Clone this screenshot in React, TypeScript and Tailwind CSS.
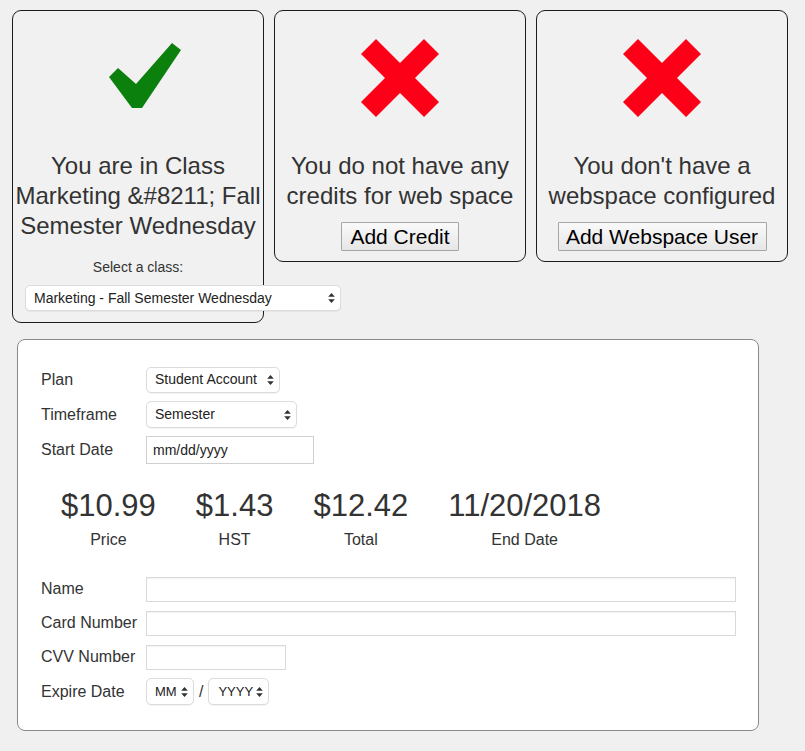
import React from 'react';

const Arrows: React.FC = () => (
  <svg
    width="7"
    height="11"
    viewBox="0 0 7 11"
    className="pointer-events-none absolute right-[6px] top-1/2 -translate-y-1/2"
  >
    <path d="M3.5 0.5L6.8 4.3H0.2z M0.2 6.7h6.6L3.5 10.5z" fill="#333" />
  </svg>
);

type SelectProps = { value: string; className: string; pad?: string };

const FakeSelect: React.FC<SelectProps> = ({ value, className, pad = 'pl-[8px] pr-[16px] text-[14px]' }) => (
  <div className={`relative shrink-0 ${className}`}>
    <select
      defaultValue={value}
      className={`h-full w-full appearance-none rounded-[5px] border border-[#dcdcdc] bg-white ${pad} text-[#222] shadow-[0_1px_1px_rgba(0,0,0,0.05)] outline-none`}
    >
      <option>{value}</option>
    </select>
    <Arrows />
  </div>
);

const CheckIcon: React.FC = () => (
  <svg width="74" height="67" viewBox="0 0 74 67" className="ml-[14px] mt-[3px]">
    <polygon points="1,35 10,26 28,42 64,1 73,8 34,66 24,66" fill="#0c800c" />
  </svg>
);

const CrossIcon: React.FC = () => (
  <svg width="78" height="78" viewBox="0 0 78 78">
    <polygon
      points="0,15 15,0 39,24 63,0 78,15 54,39 78,63 63,78 39,54 15,78 0,63 24,39"
      fill="#fb0016"
    />
  </svg>
);

const Button: React.FC<{ label: string; className: string }> = ({ label, className }) => (
  <button
    className={`mt-[11px] h-[29px] rounded-[1px] border border-[#a6a6a6] bg-gradient-to-b from-[#fafafa] to-[#e6e6e6] text-[21px] leading-none text-black ${className}`}
  >
    {label}
  </button>
);

const TextInput: React.FC<{ className: string }> = ({ className }) => (
  <input
    type="text"
    className={`shrink-0 border border-[#d9d9d9] bg-white px-[6px] text-[14px] shadow-[inset_0_1px_1px_rgba(0,0,0,0.05)] outline-none ${className}`}
  />
);

const Row: React.FC<{ label: string; children: React.ReactNode }> = ({ label, children }) => (
  <div className="flex h-[34px] items-center">
    <div className="w-[105px] shrink-0 text-[16px]">{label}</div>
    {children}
  </div>
);

const totals = [
  { value: '$10.99', label: 'Price' },
  { value: '$1.43', label: 'HST' },
  { value: '$12.42', label: 'Total' },
  { value: '11/20/2018', label: 'End Date' },
];

export default function App() {
  return (
    <div className="min-h-screen bg-[#f0f0f0] pl-[12px] pt-[10px] font-['Helvetica_Neue',Helvetica,'Liberation_Sans',Arial,sans-serif] text-[#333]">
      {/* status cards */}
      <div className="flex items-start gap-[10px]">
        <div className="w-[252px] shrink-0 rounded-[9px] border border-[#1c1c1c] bg-[#f1f1f1] pb-[11px] text-center">
          <div className="mt-[28px] flex h-[80px] items-start justify-center">
            <CheckIcon />
          </div>
          <p className="mt-[32px] text-[24px] leading-[30px]">
            You are in Class Marketing &amp;#8211; Fall Semester Wednesday
          </p>
          <p className="mt-[16px] text-[14px] leading-[20px]">Select a class:</p>
          <FakeSelect
            value="Marketing - Fall Semester Wednesday"
            className="ml-[12px] mt-[8px] h-[26px] w-[316px]"
          />
        </div>

        <div className="flex w-[252px] shrink-0 flex-col items-center rounded-[9px] border border-[#1c1c1c] bg-[#f1f1f1] pb-[10px] text-center">
          <div className="mt-[28px] flex h-[80px] items-start justify-center">
            <CrossIcon />
          </div>
          <p className="mt-[32px] text-[24px] leading-[30px]">
            You do not have any credits for web space
          </p>
          <Button label="Add Credit" className="w-[118px]" />
        </div>

        <div className="flex w-[252px] shrink-0 flex-col items-center rounded-[9px] border border-[#1c1c1c] bg-[#f1f1f1] pb-[10px] text-center">
          <div className="mt-[28px] flex h-[80px] items-start justify-center">
            <CrossIcon />
          </div>
          <p className="mt-[32px] text-[24px] leading-[30px]">
            You don't have a webspace configured
          </p>
          <Button label="Add Webspace User" className="w-[209px]" />
        </div>
      </div>

      {/* purchase form */}
      <div className="ml-[5px] mt-[16px] w-[742px] rounded-[8px] border border-[#8a8a8a] bg-white pb-[21px] pl-[23px] pr-[22px] pt-[22px]">
        <div className="flex h-[35px] items-center">
          <div className="w-[105px] shrink-0 text-[16px]">Plan</div>
          <FakeSelect value="Student Account" className="h-[26px] w-[134px]" />
        </div>
        <div className="flex h-[35px] items-center">
          <div className="w-[105px] shrink-0 text-[16px]">Timeframe</div>
          <FakeSelect value="Semester" className="h-[27px] w-[151px]" />
        </div>
        <div className="flex h-[35px] items-center">
          <div className="w-[105px] shrink-0 text-[16px]">Start Date</div>
          <input
            type="text"
            placeholder="mm/dd/yyyy"
            className="h-[28px] w-[168px] border border-[#d0d0d0] bg-white px-[6px] text-[14px] outline-none placeholder:text-[#222]"
          />
        </div>

        <div className="mt-[21px] flex">
          {totals.map((t) => (
            <div key={t.label} className="px-[20px] text-center">
              <div className="text-[31px] leading-[36px]">{t.value}</div>
              <div className="mt-[5px] text-[16px] leading-[22px]">{t.label}</div>
            </div>
          ))}
        </div>

        <div className="mt-[21px]">
          <Row label="Name">
            <TextInput className="h-[25px] flex-1" />
          </Row>
          <Row label="Card Number">
            <TextInput className="h-[25px] flex-1" />
          </Row>
          <Row label="CVV Number">
            <TextInput className="h-[25px] w-[140px]" />
          </Row>
          <div className="flex h-[35px] items-center">
            <div className="w-[105px] shrink-0 text-[16px]">Expire Date</div>
            <FakeSelect value="MM" className="h-[27px] w-[48px]" pad="pl-[8px] pr-[10px] text-[13px]" />
            <span className="mx-[5px] text-[16px]">/</span>
            <FakeSelect value="YYYY" className="h-[27px] w-[61px]" pad="pl-[9px] pr-[10px] text-[13px]" />
          </div>
        </div>
      </div>
    </div>
  );
}
